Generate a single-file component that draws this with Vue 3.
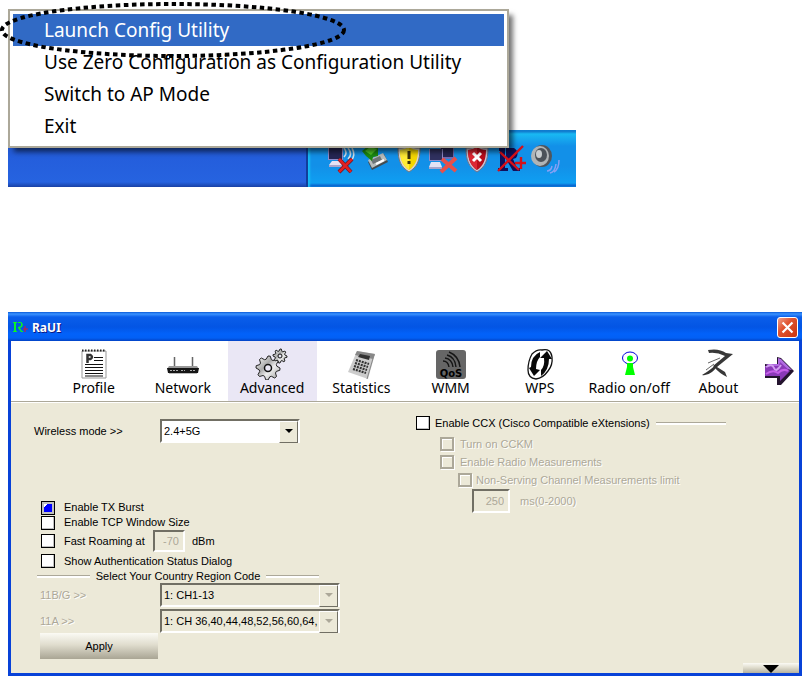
<template>
  <main class="page">
    <section class="desktop">
      <div class="menu" role="menu">
        <button
          v-for="item in menuItems"
          :key="item"
          type="button"
          role="menuitem"
          class="menu-item"
          :class="{ active: item === activeItem }"
          @mouseenter="activeItem = item"
        >
          {{ item }}
        </button>
        <svg class="marker" width="348" height="60" viewBox="0 0 348 60" aria-hidden="true">
          <ellipse cx="173" cy="30" rx="171" ry="26" />
        </svg>
      </div>

      <div class="taskbar">
        <div class="tray">
          <!-- wireless, disconnected -->
          <svg viewBox="0 0 34 32">
            <path d="M4 4h15v12H4z" fill="#8f8bc8" />
            <path d="M5 4h13v11H5z" fill="#252653" />
            <path d="M8 17h9l1 4H5z" fill="#e5e2f4" />
            <path d="M5 21h13v2H5z" fill="#aaa5ca" />
            <path d="M20 4q4 5 0 9M24 4q5 6 0 11M28 4q4 7-1 13" fill="none" stroke="#cfe1ee" stroke-width="1.6" />
            <path d="M15 15l12 13M28 15L15 28" stroke="#6e1320" stroke-width="4" />
            <path d="M15 15l12 13M28 15L15 28" stroke="#e02121" stroke-width="2.6" />
          </svg>
          <!-- removable hardware -->
          <svg viewBox="0 0 34 32">
            <path d="M10 18l16-8 4 8-16 8z" fill="#444c50" />
            <path d="M10 16l15-7 4 7-15 8z" fill="#b9bdbc" />
            <path d="M13 16l9-4 2 4-9 4z" fill="#6d7476" />
            <path d="M18 20l8-4" stroke="#fff" stroke-width="2" />
            <path d="M4 7l6-5 10 1 0 9-5 1-1 4-6-5z" fill="#1c8a10" />
            <path d="M7 7l5-4 7 2-6 6z" fill="#4fc928" />
          </svg>
          <!-- security alert -->
          <svg viewBox="0 0 34 32">
            <path d="M17 1c4 3 7 3 11 3 0 13-3 19-11 24C9 23 6 17 6 4c4 0 7 0 11-3z" fill="#d7d4d2" stroke="#777" />
            <path d="M17 3c3 2 6 3 9 3 0 10-3 16-9 20C11 22 8 16 8 6c3 0 6-1 9-3z" fill="#f4d600" />
            <path d="M17 3v23C11 22 8 16 8 6c3 0 6-1 9-3z" fill="#ffeb35" />
            <path d="M17 7v8M17 17v3" stroke="#39320a" stroke-width="3" />
          </svg>
          <!-- local network, disconnected -->
          <svg viewBox="0 0 34 32">
            <path d="M14 3h14v12H14z" fill="#6f6bb4" />
            <path d="M15 3h12v10H15z" fill="#252653" />
            <path d="M3 5h14v12H3z" fill="#8f8bc8" />
            <path d="M4 5h12v11H4z" fill="#30315f" />
            <path d="M5 18h9l2 5H3z" fill="#e5e2f4" />
            <path d="M3 23h13v2H3z" fill="#aaa5ca" />
            <path d="M16 15l14 12M30 14L15 28" stroke="#e8504b" stroke-width="4" />
          </svg>
          <!-- security shield -->
          <svg viewBox="0 0 34 32">
            <path d="M17 1c4 3 7 3 11 3 0 13-3 19-11 24C9 23 6 17 6 4c4 0 7 0 11-3z" fill="#c7c4d2" stroke="#72718b" />
            <path d="M17 3c3 2 6 3 9 3 0 10-3 16-9 20C11 22 8 16 8 6c3 0 6-1 9-3z" fill="#b80d1a" />
            <path d="M17 3v23C11 22 8 16 8 6c3 0 6-1 9-3z" fill="#dc2632" />
            <path d="M13 9l8 8M21 9l-8 8" stroke="#fff" stroke-width="3" />
          </svg>
          <!-- RaUI, no link -->
          <svg viewBox="0 0 34 32">
            <path d="M5 4h6v20h3v3H4v-3h2V7H5zM12 4h8q6 4 2 10l-3 1 4 9h3v3h-7l-7-12z" fill="#10105c" />
            <path d="M4 27L29 2M6 8l19 18" stroke="#d71018" stroke-width="2.4" />
            <path d="M27 13v12M21 19h11" stroke="#d71018" stroke-width="2.4" />
          </svg>
          <!-- volume -->
          <svg viewBox="0 0 34 32">
            <ellipse cx="14" cy="12" rx="10" ry="11" fill="#50555c" />
            <ellipse cx="12" cy="12" rx="9" ry="10" fill="#b0b4b6" />
            <ellipse cx="13" cy="11" rx="6" ry="7" fill="#4c5259" />
            <ellipse cx="11" cy="10" rx="3" ry="4" fill="#c9cdcf" />
            <path d="M19 27q4 0 5-5M22 29q5-1 6-9M26 28q5-3 5-12" fill="none" stroke="#86a0f4" stroke-width="1.5" />
          </svg>
        </div>
      </div>
    </section>

    <section class="window">
      <header class="titlebar">
        <svg class="app-icon" viewBox="0 0 16 16" aria-hidden="true">
          <path d="M0 2h4v1H3v8h1v1H0v-1h1V3H0zM5 2h3q3 2 1 5L7 8l2 3h1v1H8L5 8V7l3-1V3H5z" fill="#0bf324" />
          <path d="M12 6v6M10 9h5" stroke="#e21b2b" />
        </svg>
        <h1>RaUI</h1>
        <button type="button" class="close" aria-label="Close">
          <svg viewBox="0 0 21 21"><path d="M5 5l11 11M16 5L5 16" stroke="#fff" stroke-width="2.4" /></svg>
        </button>
      </header>

      <div class="toolbar">
        <nav>
          <button
            v-for="tab in tabs"
            :key="tab"
            type="button"
            class="tab"
            :class="{ active: tab === currentTab }"
            @click="currentTab = tab"
          >
            <svg v-if="tab === 'Profile'" viewBox="0 0 34 32">
              <path d="M5 3h24v27H5z" fill="#fff" stroke="#999" />
              <path d="M5 2.5h24" stroke="#222" stroke-width="2" stroke-dasharray="1.5 1.5" />
              <path d="M10.5 15V7h3q3 2 0 4h-3" fill="none" stroke="#333" stroke-width="2.5" />
              <path d="M17 9.5h9M17 12.5h9M8 16.5h18M8 19.5h18M8 22.5h18M8 25.5h18M8 28h18" stroke="#111" stroke-width="1.2" />
            </svg>

            <svg v-else-if="tab === 'Network'" viewBox="0 0 34 32">
              <path d="M8.5 9v10M26.5 9v10" stroke="#666" stroke-width="1.5" />
              <path d="M3 18h28l2 3H1z" fill="#999" />
              <path d="M1 20h32l-1 5H2z" fill="#151515" />
              <path d="M4 22.5h8M15 22.5h4M24 22.5h5" stroke="#aaa" stroke-dasharray="2 1" />
              <path d="M3 25.5h28" stroke="#bbb" />
            </svg>

            <svg v-else-if="tab === 'Advanced'" viewBox="0 0 34 32">
              <defs>
                <linearGradient id="metal" x1="0" y1="0" x2="1" y2="1">
                  <stop offset="0" stop-color="#fff" />
                  <stop offset=".4" stop-color="#aaa" />
                  <stop offset=".6" stop-color="#eee" />
                  <stop offset="1" stop-color="#999" />
                </linearGradient>
              </defs>
              <path :d="gear(13, 20, 12, 9)" fill="url(#metal)" stroke="#222" />
              <circle cx="13" cy="20" r="3.5" fill="#eae7f5" stroke="#111" stroke-width="1.5" />
              <path :d="gear(25, 8, 7, 5)" fill="url(#metal)" stroke="#222" />
              <circle cx="25" cy="8" r="2" fill="#eae7f5" stroke="#111" />
            </svg>

            <svg v-else-if="tab === 'Statistics'" viewBox="0 0 34 32">
              <path d="M13 3l18 3-7 25-20-7z" fill="#ccc" />
              <path d="M13 3l18 3-2 5-18-4z" fill="#888" />
              <path d="M16 6l10 2-1 4-11-3z" fill="#333" />
              <path d="M12 12l13 4M11 15l13 4M10 18l13 4M9 21l13 4" stroke="#333" stroke-width="2.2" stroke-dasharray="2 1" />
              <path d="M30 7l-7 24" stroke="#888" />
            </svg>

            <svg v-else-if="tab === 'WMM'" viewBox="0 0 34 32">
              <rect x="2" y="2" width="30" height="29" rx="3" fill="#666" />
              <path d="M9 13q5 0 6 6M11 10q7 1 8 9M13 7q8 2 9 12M15 4q10 4 11 15" fill="none" stroke="#151515" stroke-width="1.4" />
              <text x="17" y="29" text-anchor="middle">QoS</text>
            </svg>

            <svg v-else-if="tab === 'WPS'" viewBox="0 0 34 32">
              <path
                d="M9 6q5-5 10-4 9-2 10 7 1 8-4 14-5 7-12 8-8-1-8-9 0-9 4-16z"
                fill="#fff"
                stroke="#111"
                stroke-width="1.3"
              />
              <path d="M17 4q-9 4-9 15l-2 1 5 8 6-6-4-1q0-8 4-12zM18 28q8-6 8-17l3 0-5-8-7 7 4 0q1 8-3 12z" fill="#080808" />
            </svg>

            <svg v-else-if="tab === 'Radio on/off'" viewBox="0 0 34 32">
              <ellipse cx="18" cy="10" rx="7.5" ry="6" fill="none" stroke="#00d" />
              <circle cx="18" cy="10.5" r="3" fill="#0f0" />
              <path d="M15 15h6v4l2 8H13l2-8z" fill="#0f0" />
            </svg>

            <svg v-else viewBox="0 0 34 32">
              <path d="M7 2q11-2 18 3l7 1-16 13 8 5 2 5q-8-4-12-9l-2-2L24 8Q16 4 8 5z" fill="#383838" />
              <path d="M1 27q9-5 19-15-4 8-9 12-5 4-10 3z" fill="#333" />
              <path d="M7 15l12-5M5 22l8-6" stroke="#666" />
            </svg>
            <span>{{ tab }}</span>
          </button>
        </nav>
        <button type="button" class="next" aria-label="More tabs">
          <svg viewBox="0 0 30 32">
            <path d="M1 9h12V2l4 1 13 13-13 14h-4v-7H1z" fill="#24142e" />
            <path d="M1 9h13V3l3 1 11 11-13-2z" fill="#b06ae0" />
            <path d="M1 11h14l1-4 10 9-10 10v-5H1z" fill="#8a38b8" />
            <path d="M2 12q6-4 8 1t7-3" fill="none" stroke="#d19df0" stroke-width="2" />
            <path d="M2 19q7-5 12-1 5-5 10-2" fill="none" stroke="#c65ee9" stroke-width="2" />
          </svg>
        </button>
      </div>

      <form class="settings" @submit.prevent>
        <div class="general">
          <div class="field mode">
            <label for="mode">Wireless mode &gt;&gt;</label>
            <div class="select">
              <select id="mode">
                <option>2.4+5G</option>
              </select>
            </div>
          </div>

          <div class="options">
            <label class="check"><input v-model="txBurst" type="checkbox" />Enable TX Burst</label>
            <label class="check"><input type="checkbox" />Enable TCP Window Size</label>
            <div class="roaming">
              <label class="check"><input type="checkbox" />Fast Roaming at</label>
              <input id="dbm" class="number" type="text" value="-70" disabled />
              <label for="dbm">dBm</label>
            </div>
            <label class="check last"><input type="checkbox" />Show Authentication Status Dialog</label>
          </div>

          <div class="region">
            <h2>Select Your Country Region Code</h2>
            <div v-for="region in regions" :key="region.id" class="field">
              <label class="disabled" :for="region.id">{{ region.label }}</label>
              <div class="select wide">
                <select :id="region.id" disabled>
                  <option>{{ region.value }}</option>
                </select>
              </div>
            </div>
            <button type="submit" class="apply">Apply</button>
          </div>
        </div>

        <div class="ccx">
          <div class="ccx-title">
            <label class="check"><input type="checkbox" />Enable CCX (Cisco Compatible eXtensions)</label>
          </div>
          <div class="ccx-options">
            <label class="check disabled"><input type="checkbox" disabled />Turn on CCKM</label>
            <label class="check disabled"><input type="checkbox" disabled />Enable Radio Measurements</label>
            <label class="check disabled nested">
              <input type="checkbox" disabled />Non-Serving Channel Measurements limit
            </label>
            <div class="limit">
              <input id="limit" class="number" type="text" value="250" disabled />
              <label class="disabled" for="limit">ms(0-2000)</label>
            </div>
          </div>
        </div>
      </form>

      <footer>
        <button type="button" class="expand" aria-label="Show details">
          <svg viewBox="0 0 18 9"><path d="M1 1h16L9 9z" /></svg>
        </button>
      </footer>
    </section>
  </main>
</template>

<script setup>
import { ref } from 'vue';

const menuItems = [
  'Launch Config Utility',
  'Use Zero Configuration as Configuration Utility',
  'Switch to AP Mode',
  'Exit',
];
const tabs = ['Profile', 'Network', 'Advanced', 'Statistics', 'WMM', 'WPS', 'Radio on/off', 'About'];
const regions = [
  { id: 'bg', label: '11B/G >>', value: '1: CH1-13' },
  { id: 'a', label: '11A >>', value: '1: CH 36,40,44,48,52,56,60,64,' },
];

const activeItem = ref(menuItems[0]);
const currentTab = ref('Advanced');
const txBurst = ref(true);

// eight teeth around a circle
const gear = (cx, cy, outer, inner) => {
  const points = [];
  for (let i = 0; i < 32; i++) {
    const r = i % 4 < 2 ? outer : inner;
    const a = (i * Math.PI) / 16;
    points.push(`${(cx + r * Math.cos(a)).toFixed(1)} ${(cy + r * Math.sin(a)).toFixed(1)}`);
  }
  return `M${points.join('L')}z`;
};
</script>

<style>
body {
  margin: 0;
  background: #fff;
}
</style>

<style scoped>
* {
  box-sizing: border-box;
}

.page {
  padding: 9px 0 0 8px;
  font: 11px/15px 'Liberation Sans', Arial, sans-serif;
  color: #000;
}

button,
input,
select {
  margin: 0;
  padding: 0;
  border: 0;
  border-radius: 0;
  font: inherit;
  color: inherit;
}

svg {
  display: block;
}

.desktop {
  max-width: 568px;
  margin-bottom: 125px;
}

.menu {
  position: relative;
  z-index: 1;
  display: flex;
  flex-direction: column;
  max-width: 501px;
  padding: 3px 3px 4px;
  border: 2px solid #aca899;
  background: #fff;
  box-shadow: 5px 5px 5px -1px rgba(0, 0, 0, 0.55);
}

.menu-item {
  padding-left: 31px;
  background: none;
  font-family: 'Noto Sans', sans-serif;
  font-size: 19px;
  line-height: 32px;
  text-align: left;
  white-space: nowrap;
}

.menu-item.active {
  background: #316ac5;
  color: #fff;
}

.marker {
  position: absolute;
  left: -10px;
  top: -11px;
  pointer-events: none;
}

.marker ellipse {
  fill: none;
  stroke: #000;
  stroke-width: 4;
  stroke-dasharray: 4.5 3.5;
}

.taskbar {
  display: flex;
  justify-content: flex-end;
  height: 57px;
  margin-top: -18px;
  background: linear-gradient(#fff 12px, #2054c8 12px, #245edc 28px, #2663e0 52px, #1941a5);
}

.tray {
  display: flex;
  align-items: center;
  width: 270px;
  padding: 2px 0 0 16px;
  border-left: 2px solid #103f9b;
  background: linear-gradient(#0c59b9, #19b9f3 4px, #1290e8 16px, #1290e8 36px, #0f9ff2 53px, #095bc9 56px);
  box-shadow: inset 2px 0 2px #18bdf5;
}

.tray svg {
  width: 34px;
  height: 32px;
}

.window {
  border: solid #0842d8;
  border-width: 0 3px 3px;
  background: #ece9d8;
}

.titlebar {
  display: flex;
  align-items: center;
  height: 29px;
  margin: 0 -3px;
  padding: 2px 4px 0 5px;
  background: linear-gradient(#0a5ad8, #3a92ff 2px, #0a5eea 5px, #0355e4 15px, #0262fa 22px, #0260f5 26px, #0342c4);
  color: #fff;
}

.app-icon {
  width: 16px;
  height: 16px;
}

h1 {
  flex: 1;
  margin: 0 0 0 3px;
  font-family: 'Noto Sans', sans-serif;
  font-size: 12px;
  line-height: 20px;
  text-shadow: 1px 1px #0a1883;
}

.close {
  width: 21px;
  height: 21px;
  border: 1px solid #fff;
  border-radius: 3px;
  background: linear-gradient(135deg, #f0a08b, #e0532f 40%, #c8340f);
}

.close svg {
  width: 19px;
  height: 19px;
}

.toolbar {
  display: flex;
  padding-left: 38px;
  border-bottom: 1px solid #aca899;
  background: #fff;
  box-shadow: 0 1px #fff;
}

nav {
  display: grid;
  grid-template-columns: repeat(8, 1fr);
  flex: 1;
}

.tab {
  display: flex;
  flex-direction: column;
  align-items: center;
  height: 60px;
  padding-top: 7px;
  background: none;
  font-family: 'Noto Sans', sans-serif;
  font-size: 14px;
  line-height: 16px;
  white-space: nowrap;
}

.tab.active {
  background: #eae7f5;
}

.tab svg {
  width: 34px;
  height: 32px;
}

.tab text {
  font: bold 10px 'DejaVu Sans', sans-serif;
}

.next {
  width: 36px;
  padding-left: 1px;
  background: none;
}

.next svg {
  width: 30px;
  height: 32px;
}

.settings {
  display: grid;
  grid-template-columns: 1fr 1fr;
}

.general {
  padding: 17px 0 0 23px;
}

.field {
  display: flex;
  align-items: center;
}

.field label {
  width: 120px;
}

.mode {
  margin-bottom: 57px;
}

.mode label {
  width: 126px;
}

.select {
  position: relative;
  width: 140px;
}

.select.wide {
  width: 180px;
}

.select::after {
  content: '';
  position: absolute;
  top: 2px;
  right: 2px;
  width: 17px;
  height: 20px;
  border: 1px solid;
  border-color: #fff #716f64 #716f64 #fff;
  background: #ece9d8;
  pointer-events: none;
}

.select::before {
  content: '';
  position: absolute;
  z-index: 1;
  top: 10px;
  right: 7px;
  border: solid transparent;
  border-width: 4px 4px 0;
  border-top-color: #000;
  pointer-events: none;
}

.select:has(select:disabled)::before {
  border-top-color: #aca899;
}

select {
  display: block;
  appearance: none;
  width: 100%;
  height: 24px;
  padding: 0 18px 0 2px;
  border: 2px solid;
  border-color: #716f64 #fff #fff #716f64;
  background: #fff;
}

select:disabled {
  background: #ece9d8;
  color: #000;
  opacity: 1;
}

.options {
  margin-left: 7px;
}

.check {
  display: flex;
  align-items: center;
  gap: 9px;
  white-space: nowrap;
}

.check input {
  appearance: none;
  flex: none;
  width: 14px;
  height: 14px;
  border: 1px solid #000;
  background: #fff;
  box-shadow: inset -1px -1px #c0c0c0;
}

.check input:checked {
  background: linear-gradient(135deg, #fff 5px, #00f 5px);
  box-shadow: inset 0 0 0 2px #c0c0c0;
}

.check input:disabled {
  border: 2px solid #aca899;
  background: #ece9d8;
  box-shadow: 1px 1px #fff, inset 1px 1px #fff;
}

.check.last {
  height: 18px;
}

.roaming {
  display: flex;
  align-items: center;
  gap: 7px;
}

.roaming .check {
  width: 105px;
}

.number {
  width: 32px;
  height: 22px;
  padding-right: 4px;
  border: 2px solid;
  border-color: #716f64 #fff #fff #716f64;
  background: #ece9d8;
  color: #aca899;
  text-align: right;
}

.disabled {
  color: #aca899;
  text-shadow: 1px 1px #fff;
}

.region {
  margin-left: 3px;
}

h2 {
  display: flex;
  align-items: center;
  gap: 6px;
  max-width: 282px;
  margin: 0;
  font-size: 11px;
  font-weight: normal;
  line-height: 13px;
  white-space: nowrap;
}

h2::before,
h2::after,
.ccx-title::after {
  content: '';
  flex: 1;
  height: 2px;
  border-top: 1px solid #aca899;
  background: #fff;
}

.region .field {
  padding-left: 3px;
  margin-bottom: 2px;
}

.region .field:last-of-type {
  margin-bottom: 0;
}

.apply {
  display: block;
  width: 118px;
  height: 26px;
  margin-left: 3px;
  background: linear-gradient(#fbfaf4, #e0ddce 45%, #a9a594);
}

.ccx {
  padding: 12px 0 0 11px;
}

.ccx-title {
  display: flex;
  align-items: center;
  gap: 6px;
  max-width: 310px;
  height: 18px;
  margin-bottom: 3px;
}

.ccx .check {
  height: 18px;
  gap: 6px;
}

.ccx-title .check {
  gap: 5px;
}

.ccx-options {
  padding-left: 24px;
}

.ccx .nested {
  padding-left: 18px;
  gap: 4px;
}

.limit {
  display: flex;
  align-items: center;
  gap: 10px;
  padding-left: 32px;
}

.limit .number {
  width: 38px;
  height: 24px;
}

footer {
  display: flex;
  justify-content: flex-end;
  padding-top: 4px;
}

.expand {
  width: 56px;
  height: 10px;
  padding-left: 19px;
  background: linear-gradient(#fbfaf4, #e0ddce 45%, #b5b1a0);
}

.expand svg {
  width: 18px;
  height: 9px;
}
</style>
